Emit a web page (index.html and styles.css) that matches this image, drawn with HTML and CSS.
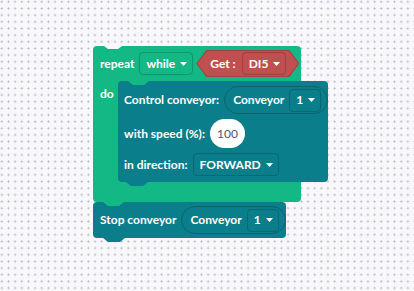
FILE: index.html
```html
<!DOCTYPE html>
<html lang="en">
<head>
    <meta charset="UTF-8">
    <title>Blocks workspace</title>
    <link rel="stylesheet" href="styles.css">
</head>
<body>
    <div class="workspace">
        <div class="stack">
            <div class="block loop">
                <div class="row head">
                    <span class="label">repeat</span>
                    <span class="dropdown">while <svg class="arrow" width="7" height="4" viewBox="0 0 7 4"><path d="M0 0H7L3.5 4Z"/></svg></span>
                    <span class="hex">
                        <span class="hex-inner">
                            <span class="label">Get :</span>
                            <span class="dropdown">DI5 <svg class="arrow" width="7" height="4" viewBox="0 0 7 4"><path d="M0 0H7L3.5 4Z"/></svg></span>
                        </span>
                    </span>
                </div>
                <div class="c-body">
                    <div class="c-arm"><span class="label">do</span></div>
                    <div class="block conveyor inner">
                        <div class="row">
                            <span class="label">Control conveyor:</span>
                            <span class="pill">
                                <span class="label">Conveyor</span>
                                <span class="dropdown">1 <svg class="arrow" width="7" height="4" viewBox="0 0 7 4"><path d="M0 0H7L3.5 4Z"/></svg></span>
                            </span>
                        </div>
                        <div class="row">
                            <span class="label">with speed (%):</span>
                            <span class="num">100</span>
                        </div>
                        <div class="row">
                            <span class="label">in direction:</span>
                            <span class="dropdown">FORWARD <svg class="arrow" width="7" height="4" viewBox="0 0 7 4"><path d="M0 0H7L3.5 4Z"/></svg></span>
                        </div>
                    </div>
                </div>
                <div class="c-foot"></div>
            </div>
            <div class="block conveyor stop">
                <span class="label">Stop conveyor</span>
                <span class="pill">
                    <span class="label">Conveyor</span>
                    <span class="dropdown">1 <svg class="arrow" width="7" height="4" viewBox="0 0 7 4"><path d="M0 0H7L3.5 4Z"/></svg></span>
                </span>
            </div>
        </div>
    </div>
</body>
</html>
```

FILE: styles.css
```css
body {
    margin: 0;
    font-family: 'Lato', 'Liberation Sans', sans-serif;
}
.workspace {
    position: relative;
    width: 414px;
    height: 291px;
    overflow: hidden;
    background-color: #f8f8fa;
    background-image: radial-gradient(circle, #b9b9cd 0.8px, transparent 1.3px);
    background-size: 6.67px 6.67px;
    background-position: -1.5px -1.5px;
}

/* blocks sit on a free canvas */
.stack {
    position: absolute;
    left: 93px;
    top: 46px;
}
.block {
    position: relative;
    border-radius: 4px;
    color: #fff;
    box-sizing: border-box;
}
.label {
    font-size: 12px;
    font-weight: 700;
    white-space: nowrap;
    line-height: 16px;
}
.row {
    display: flex;
    align-items: center;
    gap: 5px;
}

/* repeat while */
.loop {
    width: 208px;
    background-color: #13b885;
    z-index: 2;
}
.loop::before {
    content: "";
    position: absolute;
    top: 0;
    left: 11px;
    width: 18px;
    height: 3px;
    background-color: #f8f8fa;
    clip-path: polygon(0 0, 100% 0, calc(100% - 4px) 100%, 4px 100%);
}
.loop::after {
    content: "";
    position: absolute;
    bottom: -4px;
    left: 10px;
    width: 21px;
    height: 4px;
    background-color: #13b885;
    clip-path: polygon(0 0, 100% 0, calc(100% - 5px) 100%, 5px 100%);
}
.head {
    height: 35px;
    padding-left: 7px;
}
.head .hex {
    margin-left: -2px;
}
.c-body {
    display: flex;
}
.c-arm {
    width: 25px;
    flex: none;
    padding: 1px 0 0 7px;
    box-sizing: border-box;
}
.c-foot {
    height: 20px;
}

/* conveyor blocks */
.conveyor {
    background-color: #0a7e8a;
}
.inner {
    flex: none;
    width: 210px;
    padding: 5px 0 6px 6px;
    display: flex;
    flex-direction: column;
    gap: 5px;
}
.inner::before {
    content: "";
    position: absolute;
    top: 0;
    left: 10px;
    width: 21px;
    height: 4px;
    background-color: #13b885;
    clip-path: polygon(0 0, 100% 0, calc(100% - 5px) 100%, 5px 100%);
}
.inner::after,
.stop::after {
    content: "";
    position: absolute;
    bottom: -4px;
    left: 8px;
    width: 22px;
    height: 4px;
    background-color: #0a7e8a;
    clip-path: polygon(0 0, 100% 0, calc(100% - 5px) 100%, 5px 100%);
}
.stop {
    width: 193px;
    height: 36px;
    padding-left: 7px;
    display: flex;
    align-items: center;
    gap: 5px;
    z-index: 1;
}
.stop::after {
    left: 10px;
}

/* fields */
.dropdown {
    display: inline-flex;
    align-items: center;
    gap: 5px;
    height: 23px;
    padding: 0 5px 0 6px;
    box-sizing: border-box;
    border: 1px solid rgba(0, 0, 0, 0.18);
    border-radius: 4px;
    font-size: 12px;
    font-weight: 700;
    line-height: 16px;
}
.arrow {
    fill: #fff;
}
.pill {
    display: inline-flex;
    align-items: center;
    gap: 5px;
    height: 28px;
    padding: 0 6px 0 8px;
    box-sizing: border-box;
    border: 1px solid rgba(0, 0, 0, 0.2);
    border-radius: 14px;
}
.num {
    display: inline-flex;
    align-items: center;
    justify-content: center;
    width: 35px;
    height: 29px;
    border-radius: 15px;
    background-color: #fff;
    color: #4f566b;
    font-size: 12px;
}

/* hexagon value block */
.hex {
    display: inline-block;
    height: 27px;
    padding: 1px;
    box-sizing: border-box;
    background-color: #a34242;
    clip-path: polygon(0 50%, 10px 0, calc(100% - 10px) 0, 100% 50%, calc(100% - 10px) 100%, 10px 100%);
}
.hex-inner {
    display: flex;
    align-items: center;
    gap: 6px;
    height: 25px;
    padding: 0 12px 0 13px;
    background-color: #c0504f;
    clip-path: polygon(0 50%, 10px 0, calc(100% - 10px) 0, 100% 50%, calc(100% - 10px) 100%, 10px 100%);
}
```
